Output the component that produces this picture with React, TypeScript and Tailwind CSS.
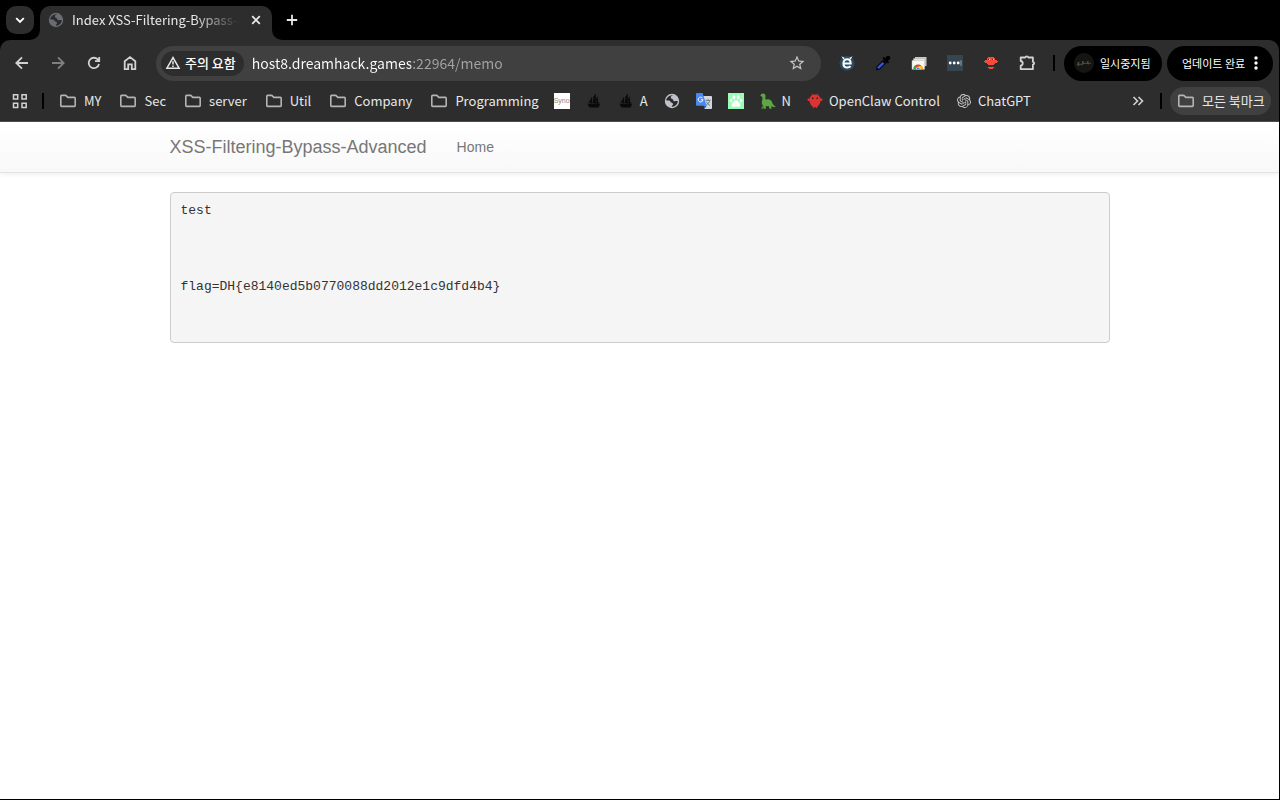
import type { ReactNode } from "react";
import { SiOpenai } from "react-icons/si";
import { MdStarBorder } from "react-icons/md";

type IconProps = { className?: string };

const FolderIcon = () => (
  <svg viewBox="0 0 18 18" className="size-[18px] shrink-0" fill="none" stroke="#b4b4b4" strokeWidth="1.6" strokeLinejoin="round">
    <path d="M1.8 13.6V4.2c0-.5.3-.8.8-.8h4.2l2 2h6.6c.5 0 .8.3.8.8v7.4c0 .5-.3.8-.8.8H2.6c-.5 0-.8-.3-.8-.8z" />
  </svg>
);

const GlobeIcon = ({ className }: IconProps) => (
  <svg viewBox="0 0 16 16" className={`size-4 shrink-0 ${className}`}>
    <circle cx="8" cy="8" r="7.2" fill="currentColor" />
    <path
      d="M9.600 2.300C8.200 2.300 6.800 3 6.800 4.400c0 1.200 1 1.200 1.700 1.600.8.4.4 1.500 1.200 2 .9.500 2.400-.2 4.100 0-.1 3-2.400 5.500-5.400 5.800l-.6-.1c-.1-1.100 1.300-1.500 1.300-2.600 0-1.200-1.600-.9-2.300-1.600-.5-.6-.2-1.500-1.200-1.800-1-.3-2.100-.1-3.300-.1C2.200 4.600 5.400 1.800 9.600 2.300z"
      fill="#2b2b2b"
    />
  </svg>
);

const ShipIcon = () => (
  <svg viewBox="0 0 16 16" className="size-4 shrink-0" fill="#0a0a0a">
    <path d="M1.400 10.800h12.800l-1.700 3.700H3.600z" />
    <path d="M5.400 5v4.400l-3.400.4c1.300-1 2-3 3.400-4.800zM9.300 2v3.200l-2.600.6c.3-1.600 1.200-2.600 2.600-3.800zM9.300 5.700V10l-3.100.4c.9-1 .3-2.900 1-4.400zM10 4.800c1.900.8 1.500 1.900 2.500 3.100L10 8.300zM10 8.700c1.800.2 2.900.9 4.200 1.100L10 10.700z" />
    <path d="M8.800 1h.9v11h-.9zM11 3.500h.8v9H11zM5.200 4.300H6v8h-.8z" />
  </svg>
);

const SynoIcon = () => (
  <span className="flex size-4 shrink-0 items-center justify-center overflow-hidden bg-white font-['Liberation_Sans'] text-[7px] text-[#85878c]">
    Syno
  </span>
);

const TranslateIcon = () => (
  <svg viewBox="0 0 16 16" className="size-4 shrink-0">
    <path d="M6 3h9.200c.5 0 .8.3.8.8v11.400c0 .5-.3.8-.8.8H8.500z" fill="#d3d7dc" />
    <path d="M9.500 7.300h5M12 6.200v1.100M13.700 7.500c-.4 2-1.800 3.500-3.500 4.600M10.500 8.800c.6 1.500 2 2.800 3.500 3.700" stroke="#66798c" strokeWidth="1" fill="none" />
    <path d="M.8 0h5.800l4 12.800H.8c-.5 0-.8-.3-.8-.8V.8C0 .3.300 0 .8 0z" fill="#4888ef" />
    <path d="M7.500 12.800h3.100L8.500 16z" fill="#2855c0" />
    <path d="M6.500 5.100A2.400 2.400 0 1 0 7 6.800H4.800" fill="none" stroke="#fff" strokeWidth="1" />
  </svg>
);

const PawIcon = () => (
  <svg viewBox="0 0 16 16" className="size-4 shrink-0">
    <path d="M0 0h16v16H0z" fill="#9bfdb5" />
    <g fill="#fff">
      <ellipse cx="5.900" cy="4.300" rx="1.400" ry="2.100" />
      <ellipse cx="10.200" cy="4.300" rx="1.400" ry="2.100" />
      <ellipse cx="3" cy="7.600" rx="1.300" ry="1.800" />
      <ellipse cx="13.100" cy="7.600" rx="1.300" ry="1.800" />
      <path d="M8 7.200c2 0 2.300 1.700 3.500 2.900 1.500 1.600.8 4-1.200 3.800-1-.1-1.500-.5-2.300-.5s-1.300.4-2.300.5c-2 .2-2.700-2.200-1.200-3.800C5.700 8.900 6 7.200 8 7.200z" />
    </g>
  </svg>
);

const DinoIcon = () => (
  <svg viewBox="0 0 16 16" className="size-4 shrink-0">
    <path
      d="M.4 2.600C.7 1.100 1.800.3 3.200.4c1.900.2 2.500 1.500 2.300 3.400-.1 1.600-.3 2.700.7 2.900C8.500 5.700 11 6.600 12 9c.7 1.900 1.600 3.700 3.800 4.800-1.600.7-3.300.2-4.500-.8l.3 2.800H9.400l-.5-2.500H5.700l.2 2.500H3.600l-.5-3.200c-1.500-1.300-1.500-3-1-4.900.4-1.400.6-2.600.2-3.500z"
      fill="#5fa544"
    />
    <path d="M2.600 12.500 1.200 15.800h1.900l1-2z" fill="#478a32" />
  </svg>
);

const ClawIcon = () => (
  <svg viewBox="0 0 16 16" className="size-4 shrink-0">
    <path d="M5 .8 6 2.400h4L11 .8" fill="none" stroke="#c93232" strokeWidth=".8" />
    <path d="M8 1.400c3 0 4.900 1.500 5.500 4.200.9-.4 2-.2 2.100.7.1 1-.9 1.800-2.200 2-.3 2.500-1.500 4.400-3.300 5.500V15H8.800v-.9H7.200v.9H5.900v-1.200C4.100 12.700 2.900 10.800 2.600 8.300 1.300 8.100.3 7.300.4 6.300c.1-.9 1.200-1.100 2.100-.7C3.100 2.900 5 1.400 8 1.400z" fill="#dc3333" />
    <circle cx="5.800" cy="5.300" r=".8" fill="#101820" />
    <circle cx="10.200" cy="5.300" r=".8" fill="#101820" />
  </svg>
);

type IconLink = { label: string; text?: string; icon: ReactNode };

const folders = ["MY", "Sec", "server", "Util", "Company", "Programming"];

const bookmarks: IconLink[] = [
  { label: "Synology", icon: <SynoIcon /> },
  { label: "Ship", icon: <ShipIcon /> },
  { label: "A", text: "A", icon: <ShipIcon /> },
  { label: "Site", icon: <GlobeIcon className="text-[#bfc2c9]" /> },
  { label: "Translate", icon: <TranslateIcon /> },
  { label: "Paw", icon: <PawIcon /> },
  { label: "N", text: "N", icon: <DinoIcon /> },
  { label: "OpenClaw Control", text: "OpenClaw Control", icon: <ClawIcon /> },
  { label: "ChatGPT", text: "ChatGPT", icon: <SiOpenai className="size-4 shrink-0 p-px text-[#c9c9c9]" /> },
];

const extensions: IconLink[] = [
  {
    label: "Edit cookies",
    icon: (
      <svg viewBox="0 0 16 16" className="size-4">
        <circle cx="8" cy="8.300" r="7.500" fill="#294b62" />
        <path d="M2.400 1.200 5.800 2.900 4.400 4.600zM13.600 1.200l-3.400 1.700 1.400 1.700z" fill="#fff" />
        <path d="M11.500 11.100c-.7.900-1.800 1.400-3.200 1.400-2.500 0-3.900-1.600-3.900-4.100 0-2.400 1.500-4.100 3.700-4.100 2.300 0 3.600 1.600 3.600 4.200H5.200" fill="none" stroke="#fff" strokeWidth="2" />
      </svg>
    ),
  },
  {
    label: "Color picker",
    icon: (
      <svg viewBox="0 0 16 16" className="size-4">
        <path d="m1 15.400.6-4.200 7-7 3.400 3.400-7 7z" fill="#08080c" />
        <path d="m3 13.200 5.400-5.400" stroke="#3753d8" strokeWidth="2.400" />
        <path d="m7.500 3 1.300-1.200 1.400 1.400L12 1.100C13.700-.4 16.400 2 15 4l-2.100 1.900 1.300 1.300L12.900 8.500z" fill="#000" />
      </svg>
    ),
  },
  {
    label: "Web store",
    icon: (
      <svg viewBox="0 0 16 16" className="size-4">
        <path d="M4 2h11.500v9H4z" fill="#c9c9c7" />
        <path d="M2.500 3.500H14v8H2.500z" fill="#e5e5e2" stroke="#a9a9a6" strokeWidth=".5" />
        <path d="M1 5.500h12.500v8.800H1z" fill="#f7f7f4" stroke="#bcbcb9" strokeWidth=".5" />
        <path d="M2.500 14.300c-.3-6.500 9.500-6.500 9.300 0z" fill="#e24436" />
        <path d="M2.500 14.300c-.1-1.700.4-3 1.200-3.900l2.600 3.900z" fill="#35a852" />
        <path d="M11.800 14.300c.1-1.500-.3-2.500-.8-3.400H7.500v3.400z" fill="#f8bd17" />
        <path d="M5 14.300c0-3.200 4.400-3.200 4.400 0z" fill="#fff" />
        <path d="M5.600 14.300c0-2.400 3.200-2.400 3.200 0z" fill="#3f7fee" />
      </svg>
    ),
  },
  {
    label: "Password manager",
    icon: (
      <svg viewBox="0 0 16 16" className="size-4">
        <path d="M0 0h16v16H0z" fill="#364651" />
        <path d="M14 5.300v5.400" stroke="#aab2b8" strokeWidth=".9" />
        <g fill="#fff">
          <circle cx="3.200" cy="8" r="1.400" />
          <circle cx="7.200" cy="8" r="1.400" />
          <circle cx="11.200" cy="8" r="1.400" />
        </g>
      </svg>
    ),
  },
  {
    label: "Red fighter",
    icon: (
      <svg viewBox="0 0 16 16" className="size-4" shapeRendering="crispEdges">
        <path d="M5 2h6v1h1v2h2v1h1v1h-1v1h-2v1h-1v1H5V9H4V8H2V7H1V6h1V5h2V3h1zM5 12h6v1h-1v1H6v-1H5z" fill="#f54a3e" />
        <path d="M5 4h2v1H5zM9 4h2v1H9zM6 10h4v1H6zM3 12h2v1H3zM11 12h2v1h-2z" fill="#7a1a15" />
        <path d="M6 4h1v1H6zM10 4h1v1h-1z" fill="#e8d5d5" />
      </svg>
    ),
  },
  {
    label: "Extensions",
    icon: (
      <svg viewBox="0 0 18 18" className="size-[18px]" fill="none" stroke="#d2d2d2" strokeWidth="1.800" strokeLinejoin="round">
        <path d="M2.700 3.500h4.700c.2-1.600 2.600-1.600 2.800 0h4.700v4.300c1.700.3 1.700 2.500 0 2.800v4.600H2.700v-3.500c2.700-.3 2.700-4.400 0-4.700z" />
      </svg>
    ),
  },
];

const navIcon = "size-[18px] fill-none stroke-[#d2d2d2] stroke-[1.8]";

const TabStrip = () => (
  <div className="flex h-10 items-end bg-black pl-[6px]">
    <button type="button" aria-label="Search tabs" className="mb-[6px] flex size-7 items-center justify-center rounded-[10px] bg-[#2d2d2d]">
      <svg viewBox="0 0 12 12" className="size-3" fill="none" stroke="#fff" strokeWidth="1.900">
        <path d="m2.200 4.200 3.800 3.800 3.800-3.800" />
      </svg>
    </button>
    <div className="relative ml-[6px] flex h-[34px] w-[232px] items-center rounded-t-[10px] bg-[#2d2d2d] pr-2 pb-[6px] pl-2">
      <svg viewBox="0 0 10 10" className="absolute bottom-0 -left-[10px] size-[10px]" fill="#2d2d2d">
        <path d="M10 0v10H0A10 10 0 0 0 10 0z" />
      </svg>
      <svg viewBox="0 0 10 10" className="absolute -right-[10px] bottom-0 size-[10px]" fill="#2d2d2d">
        <path d="M0 0v10h10A10 10 0 0 1 0 0z" />
      </svg>
      <GlobeIcon className="text-[#696c73]" />
      <span className="ml-2 w-[168px] overflow-hidden whitespace-nowrap text-[13px] leading-5 text-[#e8e8e8] [mask-image:linear-gradient(to_right,#000_122px,transparent_168px)]">
        Index XSS-Filtering-Bypass-Advanced
      </span>
      <button type="button" aria-label="Close tab" className="ml-auto flex size-4 items-center justify-center">
        <svg viewBox="0 0 10 10" className="size-[10px]" fill="none" stroke="#e8e8e8" strokeWidth="1.800">
          <path d="m1.200 1.200 7.600 7.600M8.800 1.200 1.200 8.800" />
        </svg>
      </button>
    </div>
    <button type="button" aria-label="New tab" className="mb-[6px] ml-[6px] flex size-7 items-center justify-center">
      <svg viewBox="0 0 12 12" className="size-3" fill="none" stroke="#e8e8e8" strokeWidth="1.800">
        <path d="M6 .8v10.400M.8 6h10.400" />
      </svg>
    </button>
  </div>
);

const Toolbar = () => (
  <div className="flex h-[46px] items-center pr-[6px] pl-2">
    <div className="flex gap-2">
      <button type="button" aria-label="Back" className="flex size-7 items-center justify-center">
        <svg viewBox="0 0 18 18" className={navIcon}>
          <path d="M15 9H3.800M9 3.300 3.300 9 9 14.700" />
        </svg>
      </button>
      <button type="button" aria-label="Forward" disabled className="flex size-7 items-center justify-center opacity-50">
        <svg viewBox="0 0 18 18" className={navIcon}>
          <path d="M3 9h11.200M9 3.300 14.700 9 9 14.700" />
        </svg>
      </button>
      <button type="button" aria-label="Reload" className="flex size-7 items-center justify-center">
        <svg viewBox="0 0 18 18" className={navIcon}>
          <path d="M14 10a5.200 5.200 0 1 1-1.300-4.600L14 6.800M14.200 3v4.200H10" />
        </svg>
      </button>
      <button type="button" aria-label="Home" className="flex size-7 items-center justify-center">
        <svg viewBox="0 0 18 18" className={navIcon}>
          <path d="M3.700 7.200 9 3.100l5.300 4.100v7.900h-3.500v-4.700H7.200v4.700H3.700z" />
        </svg>
      </button>
    </div>

    <div className="ml-3 flex h-[35px] flex-1 items-center rounded-full bg-[#404040] pr-[15px] pl-[5px]">
      <button type="button" className="flex h-[25px] shrink-0 items-center gap-1 rounded-full bg-[#2d2d2d] pr-2 pl-1 text-[13px] leading-5 font-medium text-white">
        <svg viewBox="0 0 16 16" className="size-4" fill="none" stroke="#e8e8e8" strokeWidth="1.500">
          <path d="M8 2.600 1.900 13.200h12.200zM8 6.200v3.400M8 10.500V12" />
        </svg>
        주의 요함
      </button>
      <input
        type="text"
        aria-label="Address"
        defaultValue="host8.dreamhack.games:22964/memo"
        className="ml-2 h-6 min-w-0 flex-1 bg-[linear-gradient(to_right,#fff_159px,#a3a3a3_159px)] bg-clip-text text-[14px] leading-6 text-transparent outline-none"
      />
      <button type="button" aria-label="Bookmark this page" className="text-[#c6c6c6]">
        <MdStarBorder className="size-[18px]" />
      </button>
    </div>

    <div className="ml-3 flex gap-2">
      {extensions.map((ext) => (
        <button key={ext.label} type="button" aria-label={ext.label} className="flex size-7 items-center justify-center">
          {ext.icon}
        </button>
      ))}
    </div>
    <div className="ml-3 h-4 w-[2px] bg-black" />
    <button type="button" className="ml-[9px] flex h-[35px] w-[98px] items-center gap-[6px] rounded-full bg-black pl-[10px] text-[11px] text-white">
      <svg viewBox="0 0 20 20" className="size-5 shrink-0">
        <circle cx="10" cy="10" r="10" fill="#151513" />
        <path d="m3 12 2-3-1 4 2-2 2 1 1-4v3l3-1 1 1 1-3v3l3-1" fill="none" stroke="#63635b" strokeWidth=".7" />
      </svg>
      <span className="whitespace-nowrap">일시중지됨</span>
    </button>
    <button type="button" className="ml-[5px] flex h-[35px] w-[106px] items-center justify-between rounded-full bg-black px-[15px] text-[11px] text-white">
      <span className="whitespace-nowrap">업데이트 완료</span>
      <svg viewBox="0 0 4 16" className="h-4 w-1" fill="#fff">
        <circle cx="2" cy="3" r="1.700" />
        <circle cx="2" cy="8" r="1.700" />
        <circle cx="2" cy="13" r="1.700" />
      </svg>
    </button>
  </div>
);

const BookmarksBar = () => (
  <div className="flex h-[35px] items-center pr-2 pb-[5px] pl-3 text-[13px] leading-5 text-[#e8e8e8]">
    <button type="button" aria-label="Apps">
      <svg viewBox="0 0 16 16" className="size-4" fill="none" stroke="#d2d2d2" strokeWidth="1.500">
        <path d="M1.500 1.800h4.200V6H1.500zM10 1.800h4.200V6H10zM1.500 10.300h4.200v4.200H1.500zM10 10.300h4.200v4.200H10z" />
      </svg>
    </button>
    <div className="ml-[14px] h-4 w-[2px] bg-black" />
    <nav aria-label="Bookmarks" className="ml-[15px] flex min-w-0 flex-1 items-center gap-[15px] overflow-hidden">
      <div className="flex shrink-0 items-center gap-[18px]">
        {folders.map((name) => (
          <button key={name} type="button" className="flex items-center gap-[7px] whitespace-nowrap">
            <FolderIcon />
            {name}
          </button>
        ))}
      </div>
      <div className="flex shrink-0 items-center gap-4">
        {bookmarks.map((item) => (
          <a key={item.label} href="#" aria-label={item.label} className="flex items-center gap-[6px] whitespace-nowrap">
            {item.icon}
            {item.text}
          </a>
        ))}
      </div>
    </nav>
    <button type="button" aria-label="More bookmarks">
      <svg viewBox="0 0 12 12" className="size-3" fill="none" stroke="#d2d2d2" strokeWidth="1.600">
        <path d="m1.500 2 4 4-4 4M6.500 2l4 4-4 4" />
      </svg>
    </button>
    <div className="ml-4 h-4 w-[2px] bg-black" />
    <button type="button" className="ml-2 flex h-7 w-[101px] items-center gap-[7px] rounded-full bg-[#404040] pl-[7px] whitespace-nowrap">
      <FolderIcon />
      모든 북마크
    </button>
  </div>
);

const memo = "test\n\n\n\nflag=DH{e8140ed5b0770088dd2012e1c9dfd4b4}\n\n\n";

const MemoPage = () => (
  <main className="flex-1 bg-white font-['Liberation_Sans',sans-serif]">
    <nav className="h-[51px] border-b border-[#e3e3e3] bg-linear-to-b from-white to-[#f8f8f8] shadow-[0_1px_5px_rgba(0,0,0,0.075)]">
      <div className="mx-auto flex h-[50px] w-full max-w-[970px] items-center px-[15px] text-[#777]">
        <a href="#" className="text-[18px] leading-5">
          XSS-Filtering-Bypass-Advanced
        </a>
        <a href="#" className="ml-[30px] text-[14px] leading-5">
          Home
        </a>
      </div>
    </nav>
    <div className="mx-auto mt-[19px] w-full max-w-[970px] px-[15px]">
      <pre className="rounded-[4px] border border-[#ccc] bg-[#f5f5f5] px-[10px] py-2 font-['Liberation_Mono',monospace] text-[13px] leading-[19px] text-[#333]">
        {memo}
      </pre>
    </div>
  </main>
);

export default function App() {
  return (
    <div className="flex min-h-screen flex-col border-r border-b border-black bg-black font-['Noto_Sans_CJK_KR',sans-serif]">
      <header>
        <TabStrip />
        <div className="rounded-t-[10px] border-b border-[#4d4d4d] bg-[#2d2d2d]">
          <Toolbar />
          <BookmarksBar />
        </div>
      </header>
      <MemoPage />
    </div>
  );
}
